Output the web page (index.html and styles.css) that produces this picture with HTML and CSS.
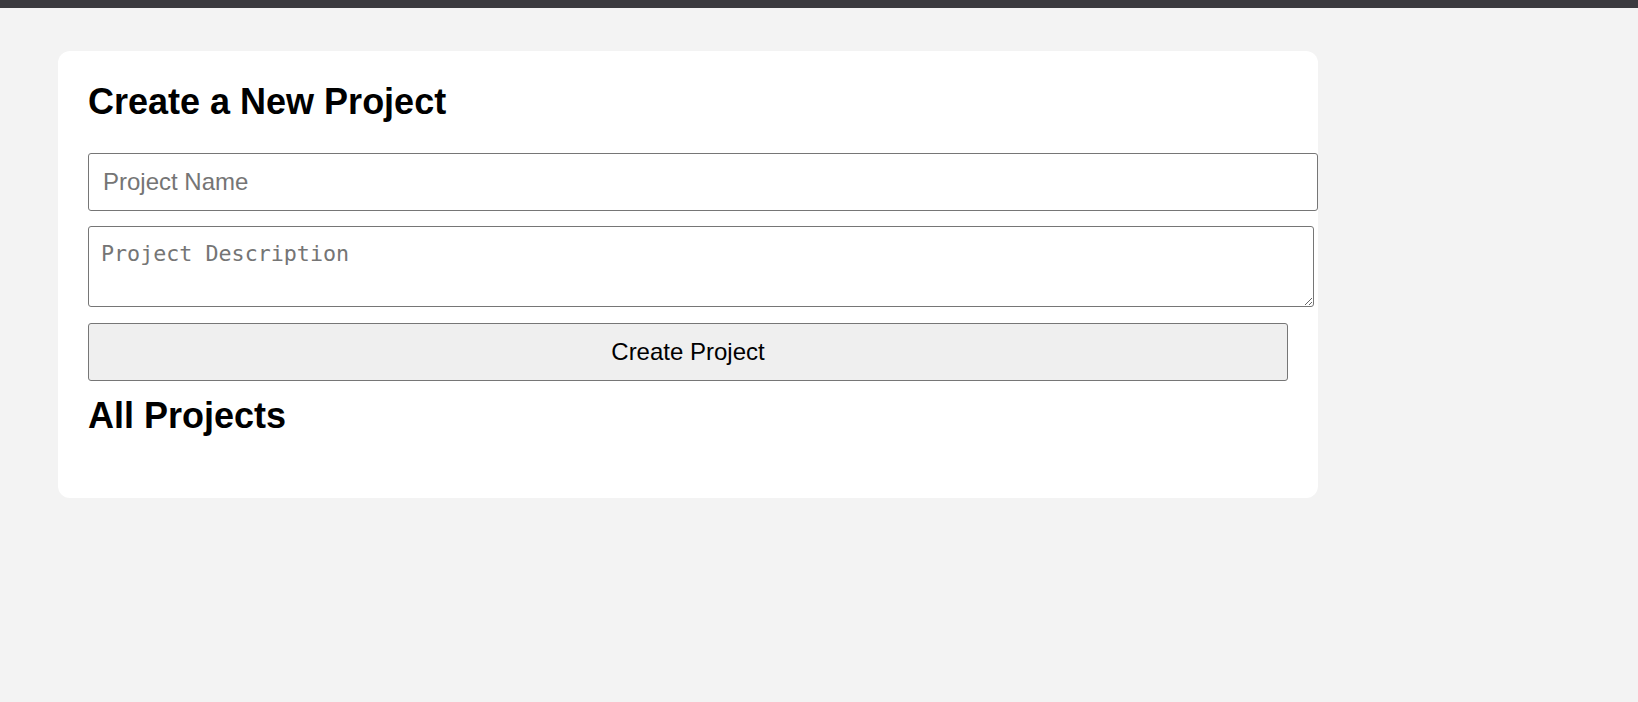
FILE: index.html
```html
<!DOCTYPE html>
<html lang="en">
<head>
<meta charset="utf-8">
<title>Projects</title>
<link rel="stylesheet" href="styles.css">
</head>
<body>
<div class="topbar"></div>
<main class="page">
  <section class="card">
    <h2 class="title">Create a New Project</h2>
    <form class="project-form">
      <input class="field field-name" type="text" placeholder="Project Name">
      <textarea class="field field-desc" placeholder="Project Description"></textarea>
      <button class="btn-create" type="button">Create Project</button>
    </form>
    <h2 class="title title-list">All Projects</h2>
    <ul class="project-list"></ul>
  </section>
</main>
</body>
</html>
```
FILE: styles.css
```css
html, body {
  margin: 0;
  padding: 0;
}

body {
  background: #f3f3f3;
  font-family: "Liberation Sans", Arial, sans-serif;
  color: #000;
}

.topbar {
  height: 8px;
  background: #3b3a3f;
}

.page {
  padding: 43px 58px;
}

.card {
  width: 1200px;
  background: #ffffff;
  border-radius: 12px;
  padding: 30px 30px 30px;
}

.title {
  margin: 0;
  font-size: 36px;
  line-height: 42px;
  font-weight: bold;
}

.project-form {
  display: flex;
  flex-direction: column;
  align-items: flex-start;
  margin-top: 30px;
}

.field {
  font-family: "Liberation Sans", Arial, sans-serif;
  border: 1px solid #767676;
  border-radius: 3px;
  background: #fff;
  color: #000;
  margin: 0;
}

.field::placeholder {
  color: #757575;
}

.field-name {
  box-sizing: border-box;
  width: 1230px;
  height: 58px;
  padding: 0 14px;
  font-size: 24px;
}

.field-desc {
  box-sizing: border-box;
  width: 1226px;
  height: 81px;
  margin-top: 15px;
  padding: 14px 12px 12px;
  font-family: "DejaVu Sans Mono", "Liberation Mono", monospace;
  font-size: 21.7px;
  line-height: 26px;
  resize: both;
}

.btn-create {
  box-sizing: border-box;
  width: 1200px;
  height: 58px;
  margin-top: 16px;
  background: #efefef;
  border: 1px solid #767676;
  border-radius: 3px;
  font-family: "Liberation Sans", Arial, sans-serif;
  font-size: 24px;
  color: #000;
  padding: 0;
}

.title-list {
  margin-top: 14px;
}

.project-list {
  list-style: none;
  margin: 0;
  padding: 0;
  height: 31px;
}
```
